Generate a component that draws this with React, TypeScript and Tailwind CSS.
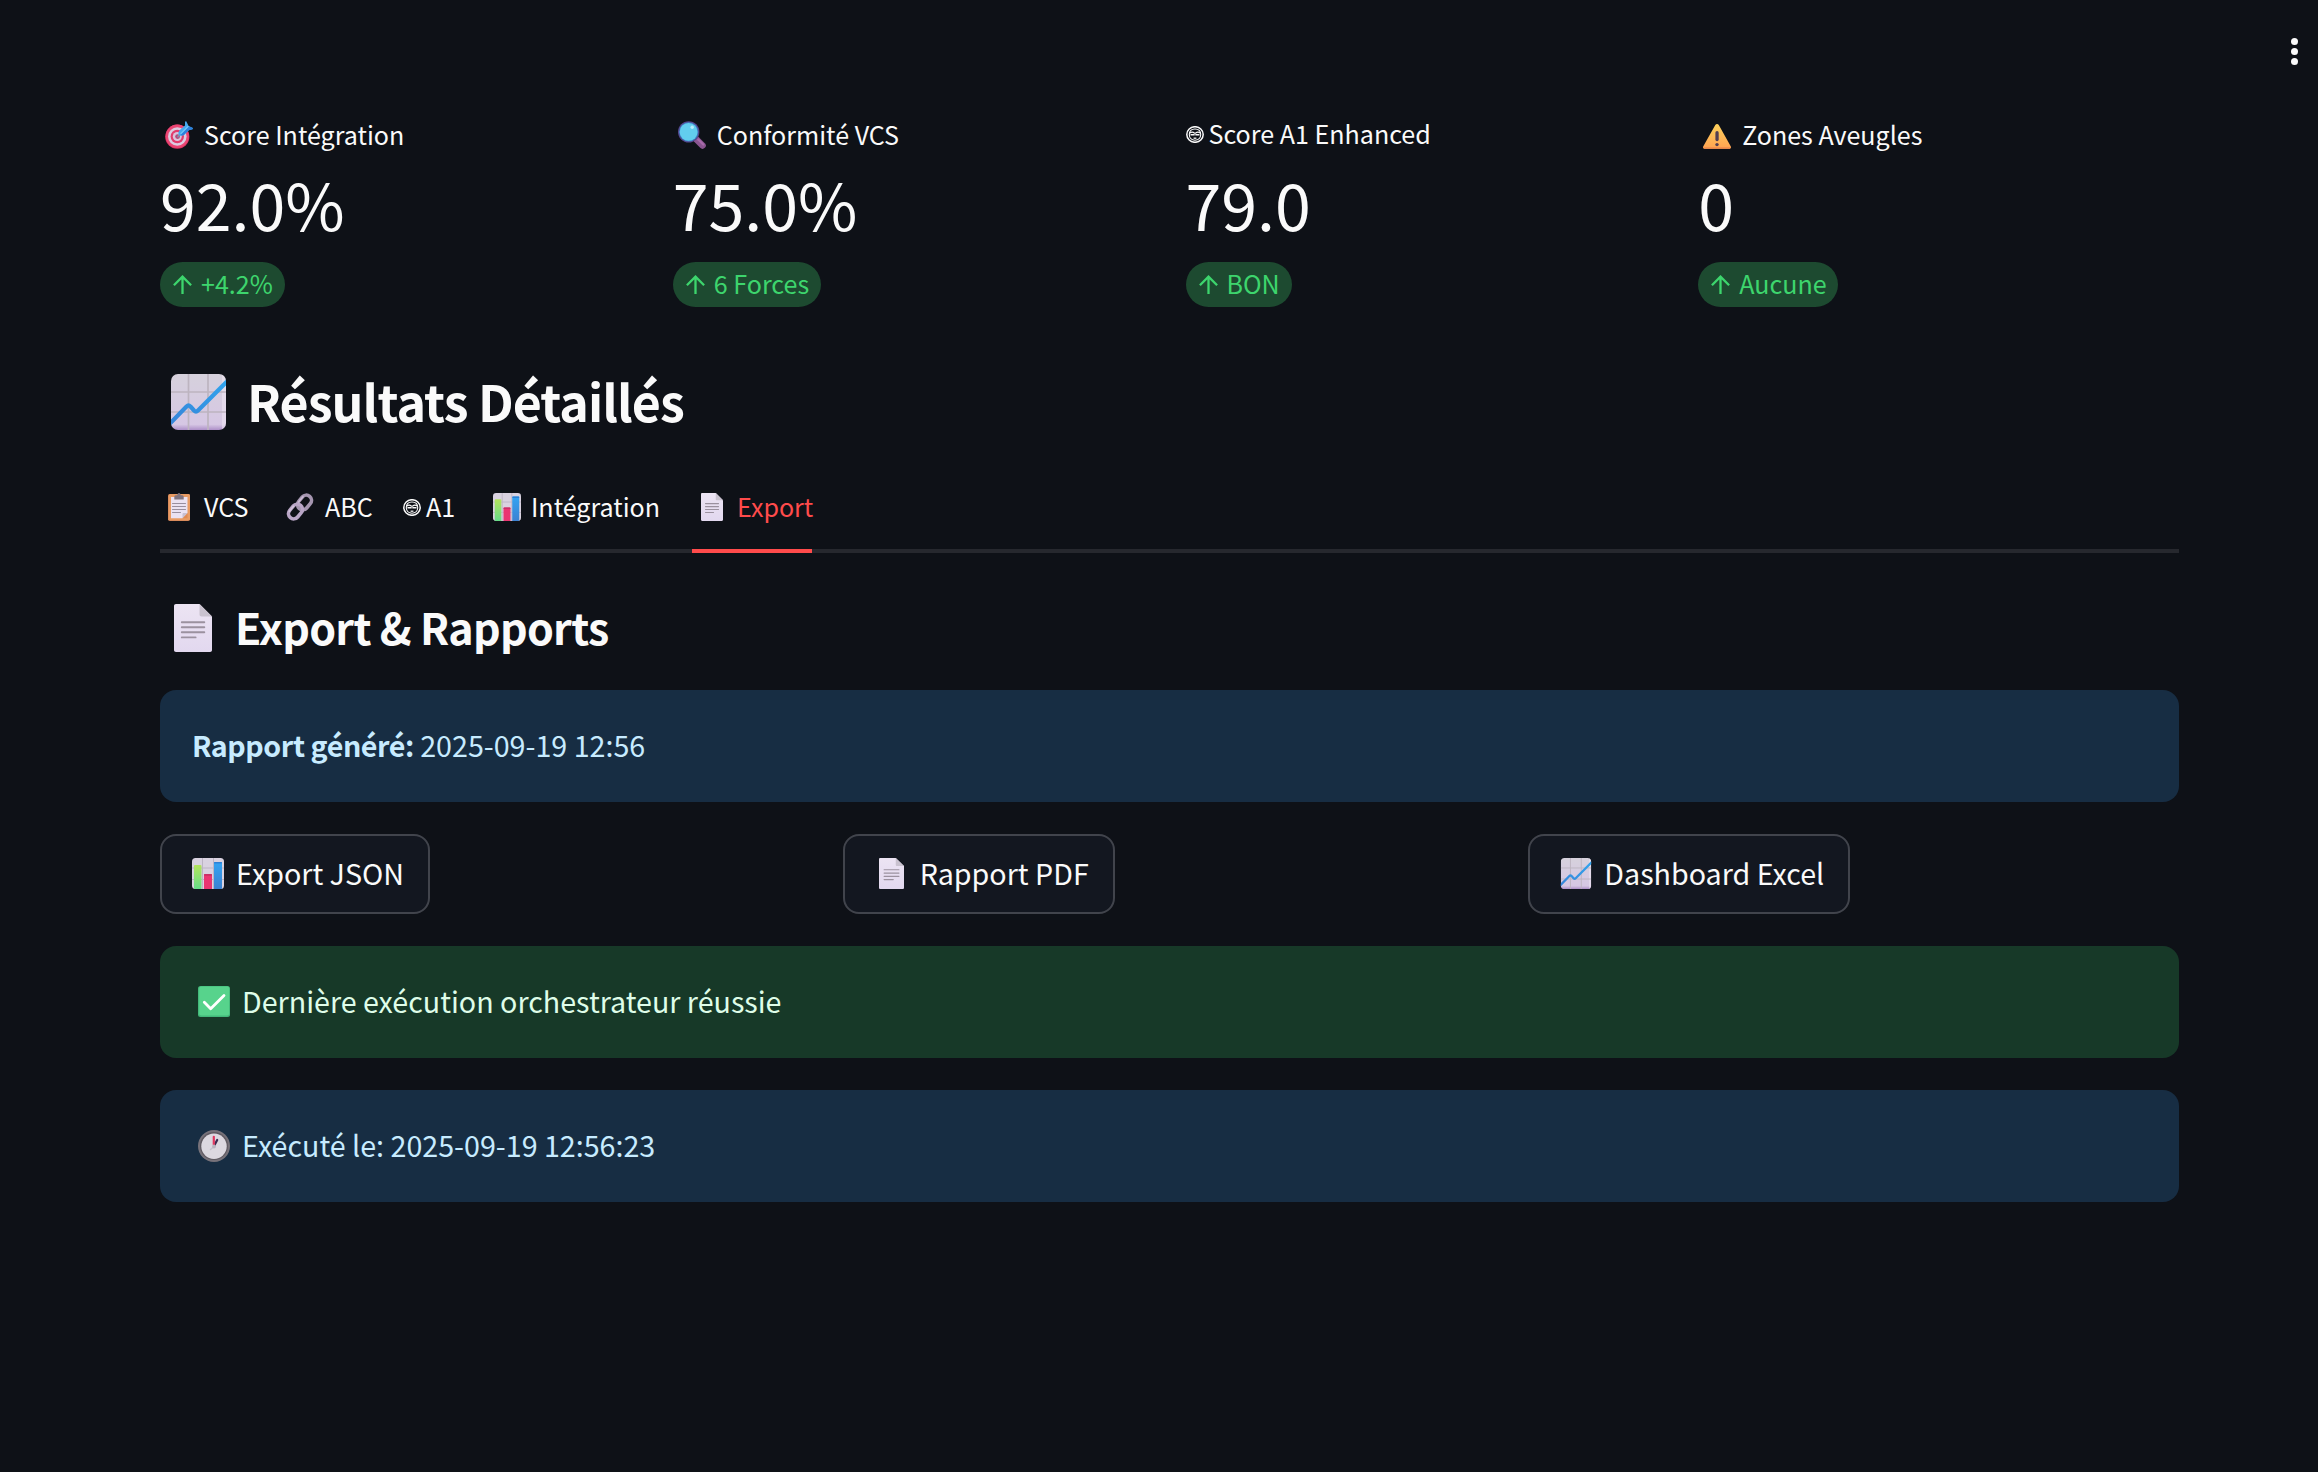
import type { ReactNode } from 'react';

type IconProps = { className?: string };

function TargetIcon({ className = '' }: IconProps) {
  return (
    <svg viewBox="0 0 28 28" className={`shrink-0 ${className}`} aria-hidden="true">
      <circle cx="12.3" cy="15.7" r="12.1" fill="#d8315f" />
      <circle cx="12.3" cy="15.2" r="11.6" fill="#ea4573" />
      <circle cx="12.3" cy="15.5" r="9.3" fill="#dccbe0" />
      <circle cx="12.3" cy="15.5" r="6.7" fill="#e23b6c" />
      <circle cx="12.3" cy="15.5" r="4.5" fill="#d9c3dc" />
      <circle cx="12.6" cy="15.6" r="2.4" fill="#b7487c" />
      <path d="M13 15.6 21 7.4" stroke="#8190a8" strokeWidth="1.8" strokeLinecap="round" />
      <path d="M13.5 11.5c.2-1 .8-2 1.6-2.700L20 4.500V1.200c0-.9 1-1.200 1.500-.5l2.100 4.300 3.700 1.700c.8.400.8 1.200.1 1.500l-3.600 1-4.600 4.500c-1.200 1-3.300 1.300-4.700.7-1-.6-1.300-1.800-1-2.900z" fill="#45a8ee" />
      <path d="M15.500 13.500 24 5.200l3.300 1.500c.8.400.8 1.200.1 1.500l-3.600 1-4.600 4.500c-1 1-2.600 1.300-3.700-.2z" fill="#2d80dc" />
      <path d="M16 12.500 23 5.500" stroke="#6fc4f7" strokeWidth="1.300" strokeLinecap="round" />
    </svg>
  );
}

function MagnifierIcon({ className = '' }: IconProps) {
  return (
    <svg viewBox="0 0 28 28" className={`shrink-0 ${className}`} aria-hidden="true">
      <path d="M18.500 18.500 24.500 24.500" stroke="#8a5590" strokeWidth="6.600" strokeLinecap="round" />
      <path d="M20.300 18.500 25.300 23.500" stroke="#a86bab" strokeWidth="2.200" strokeLinecap="round" />
      <circle cx="10.700" cy="10.900" r="10.700" fill="#56468f" />
      <circle cx="10.700" cy="10.900" r="9.600" fill="#3c86c4" />
      <circle cx="10.600" cy="10.900" r="8.900" fill="#62cdee" />
      <circle cx="14.200" cy="6.200" r="1.700" fill="#b5ecfb" />
    </svg>
  );
}

function WarningIcon({ className = '' }: IconProps) {
  return (
    <svg viewBox="0 0 28 25" className={`shrink-0 ${className}`} aria-hidden="true">
      <defs>
        <linearGradient id="warn" x1="0" y1="0" x2="0" y2="1">
          <stop offset="0" stopColor="#fdd15b" />
          <stop offset="1" stopColor="#ffa352" />
        </linearGradient>
      </defs>
      <path d="M12.300 1.100c.8-1.400 2.700-1.400 3.500 0L27.700 22.300c.8 1.400 0 2.500-1.500 2.500H1.800c-1.500 0-2.300-1.100-1.500-2.500z" fill="url(#warn)" />
      <path d="M.4 23.300c.2.900.8 1.500 1.600 1.500h24c.8 0 1.400-.6 1.600-1.500z" fill="#f08a4c" />
      <rect x="12.400" y="7" width="3.300" height="10.200" rx="1.650" fill="#533f52" />
      <circle cx="14" cy="20.600" r="1.700" fill="#533f52" />
    </svg>
  );
}

function TrendIcon({ className = '' }: IconProps) {
  return (
    <svg viewBox="0 0 55 56" className={`shrink-0 ${className}`} aria-hidden="true">
      <defs>
        <linearGradient id="trendbg" x1="0" y1="0" x2="0" y2="1">
          <stop offset="0" stopColor="#d6d1dc" />
          <stop offset="0.9" stopColor="#d6c7e4" />
          <stop offset="1" stopColor="#ad8fc8" />
        </linearGradient>
        <linearGradient id="trendline" x1="0" y1="1" x2="1" y2="0">
          <stop offset="0" stopColor="#3784d8" />
          <stop offset="1" stopColor="#30a5ee" />
        </linearGradient>
        <clipPath id="trendclip">
          <rect width="55" height="56" rx="7" />
        </clipPath>
      </defs>
      <g clipPath="url(#trendclip)">
        <rect width="55" height="56" fill="url(#trendbg)" />
        <rect x="51" width="4" height="56" fill="#f2e9f6" opacity="0.5" />
        <path d="M17.500 0v56M37 0v56M0 18h55M0 38h55" stroke="#bdb4c0" strokeWidth="1.700" />
        <path d="M-2 50.500 15.500 32.500Q17.500 30.600 19.500 32.500L23 36.500Q25 38.500 27 36.500L57 6.500" fill="none" stroke="url(#trendline)" strokeWidth="4.200" />
      </g>
    </svg>
  );
}

function BarsIcon({ className = '' }: IconProps) {
  return (
    <svg viewBox="0 0 32 31" preserveAspectRatio="none" className={`shrink-0 ${className}`} aria-hidden="true">
      <defs>
        <linearGradient id="barg" x1="0" y1="0" x2="0" y2="1">
          <stop offset="0" stopColor="#b3e35c" />
          <stop offset="1" stopColor="#5fdc8c" />
        </linearGradient>
        <linearGradient id="barb" x1="0" y1="0" x2="0" y2="1">
          <stop offset="0" stopColor="#32a4f3" />
          <stop offset="1" stopColor="#3d7fcf" />
        </linearGradient>
        <clipPath id="barclip">
          <rect width="32" height="31" rx="3.500" />
        </clipPath>
      </defs>
      <g clipPath="url(#barclip)">
        <rect width="32" height="31" fill="#d9d2e0" />
        <path d="M10.500 0v31M21.500 0v31M0 10h32M0 21.500h32" stroke="#bcb4c4" strokeWidth="1" />
        <rect x="2" y="7" width="7.500" height="26" rx="1" fill="url(#barg)" />
        <rect x="12" y="16" width="8" height="17" rx="1" fill="#ea3571" />
        <rect x="12" y="16" width="8" height="1.800" rx=".9" fill="#c92f66" />
        <rect x="22" y="4" width="8" height="29" rx="1" fill="url(#barb)" />
        <rect x="22" y="4" width="8" height="1.500" rx=".7" fill="#2c80d6" />
      </g>
    </svg>
  );
}

function PageIcon({ className = '' }: IconProps) {
  return (
    <svg viewBox="0 0 38 48" preserveAspectRatio="none" className={`shrink-0 ${className}`} aria-hidden="true">
      <defs>
        <linearGradient id="page" x1="0" y1="0" x2="0" y2="1">
          <stop offset="0" stopColor="#ece4f3" />
          <stop offset="1" stopColor="#e2d8ef" />
        </linearGradient>
      </defs>
      <path d="M2 0h23.500L38 12.500V46c0 1.200-.8 2-2 2H2c-1.200 0-2-.8-2-2V2C0 .8.800 0 2 0z" fill="url(#page)" />
      <path d="M25.500 0 38 12.500H27.500c-1.200 0-2-.8-2-2z" fill="#c9c2cf" />
      <path d="M7.800 18.200h22.500M7.800 23.300h22.500M7.800 28.300h22.500M7.800 33.400h13.800" stroke="#9b919f" strokeWidth="1.900" strokeLinecap="round" />
    </svg>
  );
}

function ClipboardIcon({ className = '' }: IconProps) {
  return (
    <svg viewBox="0 0 22 28" className={`shrink-0 ${className}`} aria-hidden="true">
      <rect y="1" width="22" height="27" rx="1.800" fill="#d98b5b" />
      <rect x="1" y="1" width="21" height="26" rx="1.500" fill="#e89b63" />
      <path d="M3 4h16.500v16l-5 5.300H3z" fill="#eae2f2" />
      <path d="M19.500 20v5.300h-5z" fill="#e08a52" />
      <path d="M19.500 20h-3.700c-.8 0-1.300.5-1.300 1.300v4z" fill="#c8bfd0" />
      <path d="M4.500 10.500h13M4.500 13.500h13M4.500 16.500h13M4.500 19.500h8" stroke="#988e9e" strokeWidth="1" strokeLinecap="round" />
      <path d="M6.300 6.500V4c0-1 .6-1.700 1.500-1.700h1.500C9.300 1 10 0 11 0s1.700 1 1.700 2.300h1.500c.9 0 1.500.7 1.500 1.700v2.500z" fill="#80747f" />
    </svg>
  );
}

function LinkIcon({ className = '' }: IconProps) {
  return (
    <svg viewBox="0 0 28 28" className={`shrink-0 ${className}`} aria-hidden="true">
      <g fill="none" strokeWidth="3.600">
        <rect x="-8" y="-5.200" width="16" height="10.400" rx="5.200" transform="translate(18.500 9.500) rotate(-50)" stroke="#a596b0" />
        <rect x="-8" y="-5.200" width="16" height="10.400" rx="5.200" transform="translate(9.500 18.500) rotate(-50)" stroke="#b9a6c6" />
        <path d="M12.500 9 17 3.800" stroke="#cdbdd7" strokeWidth="1.500" strokeLinecap="round" />
        <path d="M3.200 18.500 7.500 13.200" stroke="#d3c4dc" strokeWidth="1.500" strokeLinecap="round" />
      </g>
    </svg>
  );
}

function FaceIcon({ className = '' }: IconProps) {
  return (
    <svg viewBox="0 0 18 17" className={`shrink-0 ${className}`} fill="none" stroke="#fafafa" aria-hidden="true">
      <ellipse cx="9" cy="8.500" rx="8.200" ry="7.800" strokeWidth="1.500" />
      <path d="M3.300 8.500c0-3.600 2-5.500 5.700-5.500s5.700 1.900 5.700 5.500c0 3.300-2.300 5.700-5.700 5.700s-5.700-2.400-5.700-5.700z" strokeWidth="1.100" />
      <path d="M3.800 7.200c1.300-1.400 3.300-1.400 4.500 0M9.700 7.200c1.300-1.400 3.300-1.400 4.500 0" strokeWidth="1.200" />
      <path d="M4.500 8.700h3.500M10 8.700h3.500M9 6.500v3" strokeWidth="1.400" />
      <path d="M7.600 12.200h2.800" strokeWidth="1.300" />
    </svg>
  );
}

function CheckIcon({ className = '' }: IconProps) {
  return (
    <svg viewBox="0 0 32 31" className={`shrink-0 ${className}`} aria-hidden="true">
      <rect width="32" height="31" rx="2.500" fill="#43b87a" />
      <rect x="1.200" y=".6" width="30" height="29" rx="2" fill="#57d38c" />
      <path d="M6.300 16.200 12.700 22.700 26 9.500" fill="none" stroke="#fff" strokeWidth="2.800" strokeLinecap="round" strokeLinejoin="round" />
    </svg>
  );
}

function ClockIcon({ className = '' }: IconProps) {
  return (
    <svg viewBox="0 0 32 32" className={`shrink-0 ${className}`} aria-hidden="true">
      <circle cx="16" cy="16" r="16" fill="#77727a" />
      <circle cx="16" cy="16" r="14" fill="#5f5a62" />
      <circle cx="16" cy="16.200" r="12.700" fill="#dcd8e0" />
      <path d="M15.500 17 12.500 19.500" stroke="#c6c0cc" strokeWidth="1.500" strokeLinecap="round" />
      <path d="M16.300 15.500 19.200 10" stroke="#3d2c52" strokeWidth="2.200" strokeLinecap="round" />
      <path d="M15.800 14.500V6.800" stroke="#e0375f" strokeWidth="2.200" strokeLinecap="round" />
      <circle cx="16" cy="16.500" r="1.900" fill="#b9b4c0" />
    </svg>
  );
}

function ArrowUp() {
  return (
    <svg viewBox="0 0 19 19" className="mt-[13px] ml-[13px] h-[19px] w-[19px] shrink-0" fill="none" stroke="#3dd56d" strokeWidth="2.300" aria-hidden="true">
      <path d="M9.500 19V1.800M.9 10.200 9.500 1.600l8.600 8.600" />
    </svg>
  );
}

type MetricProps = { icon: ReactNode; label: string; labelClass: string; value: string; delta: string; badgeClass: string };

function Metric({ icon, label, labelClass, value, delta, badgeClass }: MetricProps) {
  return (
    <div className="flex flex-col items-start">
      <div className="flex h-[42px] items-start text-[25.07px] leading-[42px]">
        {icon}
        <span className={labelClass}>{label}</span>
      </div>
      <div className="mt-2 text-[64.5px] leading-[80px]">{value}</div>
      <div className={`mt-[19px] flex h-[45px] items-start rounded-full bg-[#1d4a30] text-[25.07px] leading-[42px] text-[#3dd56d] ${badgeClass}`}>
        <ArrowUp />
        <span className="ml-[9px]">{delta}</span>
      </div>
    </div>
  );
}

function ExportButton({ className, children }: { className: string; children: ReactNode }) {
  return (
    <button className={`flex h-20 items-start rounded-2xl border-2 border-[#41444c] bg-[#131720] pt-[13px] text-[28.65px] leading-[48px] ${className}`}>
      {children}
    </button>
  );
}

function Alert({ className, children }: { className: string; children: ReactNode }) {
  return (
    <div className={`flex h-28 items-start rounded-2xl pt-[31px] text-[28.65px] leading-[48px] ${className}`}>{children}</div>
  );
}

export default function App() {
  return (
    <div className="relative flex h-[1472px] w-[2318px] flex-col overflow-hidden bg-[#0e1117] pt-[113px] pl-40 font-['Noto_Sans_CJK_SC','Noto_Sans',sans-serif] whitespace-nowrap text-[#fafafa]">
      <button className="absolute top-[38px] right-5 flex w-[7px] flex-col items-center gap-[3px]" aria-label="Menu">
        <span className="h-[7px] w-[7px] rounded-full bg-[#fafafa]" />
        <span className="h-[7px] w-[7px] rounded-full bg-[#fafafa]" />
        <span className="h-[7px] w-[7px] rounded-full bg-[#fafafa]" />
      </button>

      <main className="flex w-[2019px] flex-col">
        <section className="grid grid-cols-4 gap-8">
          <Metric icon={<TargetIcon className="mt-2 ml-[5px] h-7 w-7" />} label="Score Intégration" labelClass="ml-[11px]" value="92.0%" delta="+4.2%" badgeClass="w-[125px]" />
          <Metric icon={<MagnifierIcon className="mt-2 ml-[5px] h-7 w-7" />} label="Conformité VCS" labelClass="ml-[11px]" value="75.0%" delta="6 Forces" badgeClass="w-[148px]" />
          <Metric icon={<FaceIcon className="mt-[13px] h-[17px] w-[18px]" />} label="Score A1 Enhanced" labelClass="-mt-px ml-[5px]" value="79.0" delta="BON" badgeClass="w-[106px]" />
          <Metric icon={<WarningIcon className="mt-[11px] ml-[5px] h-[25px] w-7" />} label="Zones Aveugles" labelClass="ml-[11px]" value="0" delta="Aucune" badgeClass="w-[140px]" />
        </section>

        <h2 className="mt-[59px] flex h-[68px] items-start text-[50.1px] leading-[68px] font-bold">
          <TrendIcon className="mt-2 ml-[11px] h-14 w-[55px]" />
          <span className="ml-[21px] tracking-[-0.95px]">Résultats Détaillés</span>
        </h2>

        <nav className="mt-[51px] flex h-[68px] items-start border-b-4 border-[#26282e] text-[25.07px] leading-[42px]">
          <div className="flex w-[118px] items-start">
            <ClipboardIcon className="mt-2 ml-2 h-7 w-[22px]" />
            <span className="ml-[14px]">VCS</span>
          </div>
          <div className="flex w-[125px] items-start">
            <LinkIcon className="mt-2 ml-2 h-7 w-7" />
            <span className="ml-[11px]">ABC</span>
          </div>
          <div className="flex w-[82px] items-start">
            <FaceIcon className="mt-[14px] h-[17px] w-[18px]" />
            <span className="ml-[5px]">A1</span>
          </div>
          <div className="flex w-[207px] items-start">
            <BarsIcon className="mt-2 ml-2 h-7 w-7" />
            <span className="ml-[10px]">Intégration</span>
          </div>
          <div className="flex h-[68px] w-[120px] items-start border-b-4 border-[#ff4b4b] text-[#ff4b4b]">
            <PageIcon className="mt-2 ml-[9px] h-7 w-[22px]" />
            <span className="ml-[14px]">Export</span>
          </div>
        </nav>

        <h3 className="mt-11 flex h-[58px] items-start text-[42.97px] leading-[58px] font-bold">
          <PageIcon className="mt-[7px] ml-[14px] h-12 w-[38px]" />
          <span className="ml-[23px] tracking-[-0.7px]">Export &amp; Rapports</span>
        </h3>

        <Alert className="mt-[35px] bg-[#172d43] pl-8 text-[#c7ebff]">
          <p>
            <strong className="font-bold tracking-[-0.44px]">Rapport généré:</strong> 2025-09-19 12:56
          </p>
        </Alert>

        <div className="mt-8 grid grid-cols-3 gap-8">
          <div className="flex">
            <ExportButton className="w-[270px]">
              <BarsIcon className="mt-[9px] ml-[30px] h-[31px] w-8" />
              <span className="ml-3">Export JSON</span>
            </ExportButton>
          </div>
          <div className="-ml-px flex">
            <ExportButton className="w-[272px]">
              <PageIcon className="mt-[9px] ml-[34px] h-[31px] w-[25px]" />
              <span className="ml-4">Rapport PDF</span>
            </ExportButton>
          </div>
          <div className="flex">
            <ExportButton className="ml-px w-[322px]">
              <TrendIcon className="mt-[9px] ml-[30px] h-[31px] w-8" />
              <span className="ml-3">Dashboard Excel</span>
            </ExportButton>
          </div>
        </div>

        <Alert className="mt-8 bg-[#173928] text-[#dffde9]">
          <CheckIcon className="mt-[9px] ml-[38px] h-[31px] w-8" />
          <p className="ml-3">Dernière exécution orchestrateur réussie</p>
        </Alert>
        <Alert className="mt-8 bg-[#172d43] text-[#c7ebff]">
          <ClockIcon className="mt-[9px] ml-[38px] h-8 w-8" />
          <p className="ml-3">Exécuté le: 2025-09-19 12:56:23</p>
        </Alert>
      </main>
    </div>
  );
}
